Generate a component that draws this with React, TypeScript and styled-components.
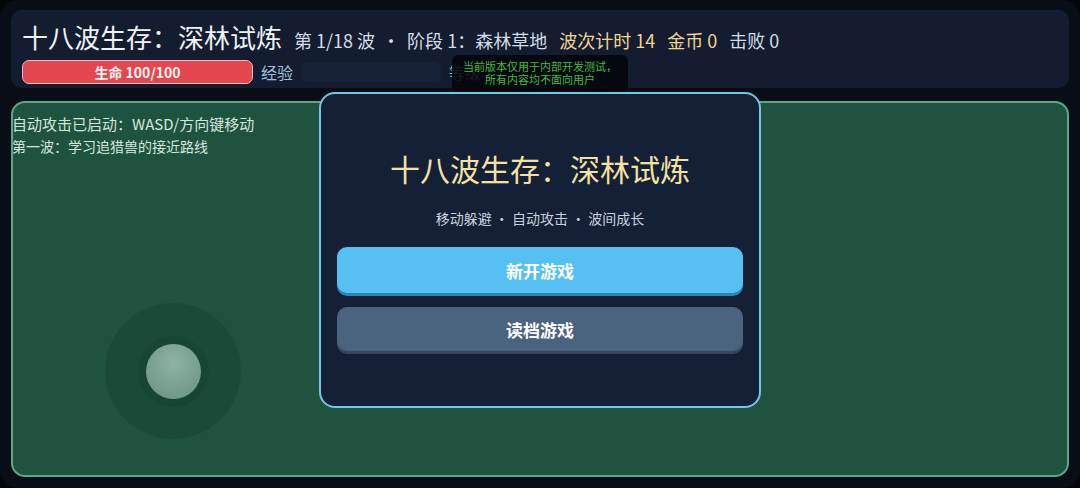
import React from 'react';
import styled, { createGlobalStyle } from 'styled-components';

const GlobalStyle = createGlobalStyle`
  html, body {
    margin: 0;
    padding: 0;
    background: #03060b;
  }
  body {
    font-family: "Noto Sans CJK SC", "Noto Sans", sans-serif;
    color: #dbe4ee;
  }
  * {
    box-sizing: border-box;
  }
`;

const Screen = styled.div`
  position: relative;
  width: 1080px;
  height: 488px;
  padding: 10px 11px 11px 11px;
  display: flex;
  flex-direction: column;
  gap: 13px;
  background: #080d16;
  border-radius: 18px;
  overflow: hidden;
`;

const Header = styled.header`
  background: #131d2f;
  border-radius: 10px;
  padding: 9px 11px 5px 11px;
  display: flex;
  flex-direction: column;
  gap: 5px;
  height: 78px;
`;

const TitleRow = styled.div`
  display: flex;
  align-items: baseline;
  gap: 12px;
  white-space: nowrap;
`;

const GameTitle = styled.h1`
  margin: 0;
  font-size: 26px;
  font-weight: 400;
  line-height: 36px;
  color: #eef2f7;
`;

const Stat = styled.span<{ $tone?: 'gold' }>`
  font-size: 18px;
  color: ${({ $tone }) => ($tone === 'gold' ? '#f1d493' : '#d3dce8')};
`;

const Dot = styled.span`
  font-size: 18px;
  color: #d3dce8;
  margin: 0 7px;
`;

const BarRow = styled.div`
  display: flex;
  align-items: center;
  gap: 8px;
  height: 24px;
`;

const HpBar = styled.div`
  width: 231px;
  height: 24px;
  border-radius: 7px;
  background: #e4474f;
  border: 1.5px solid #f3b9bd;
  display: flex;
  align-items: center;
  justify-content: center;
  font-size: 14px;
  font-weight: 700;
  color: #fff4f4;
`;

const BarLabel = styled.span`
  font-size: 16px;
  color: #9cc0dc;
`;

const ExpBar = styled.div`
  width: 140px;
  height: 20px;
  border-radius: 6px;
  background: #162237;
`;

const Arena = styled.main`
  position: relative;
  flex: 1;
  background: #20533f;
  border: 2px solid #58a98a;
  border-radius: 14px;
`;

const Hud = styled.div`
  position: absolute;
  top: 10px;
  left: -1px;
  display: flex;
  flex-direction: column;
`;

const HudLine = styled.div<{ $size: number }>`
  font-size: ${({ $size }) => $size}px;
  line-height: 22px;
  color: #d3e6dd;
`;

const Joystick = styled.div`
  position: absolute;
  left: 92px;
  top: 200px;
  width: 136px;
  height: 136px;
  border-radius: 50%;
  background: #1c4a39;
  display: flex;
  align-items: center;
  justify-content: center;
`;

const Knob = styled.div`
  width: 55px;
  height: 55px;
  border-radius: 50%;
  background: radial-gradient(circle at 50% 35%, #8eb3a4 0%, #739a8b 70%, #6a9081 100%);
  box-shadow: 0 0 0 8px rgba(20, 60, 45, 0.3);
`;

const Modal = styled.section`
  position: absolute;
  left: 319px;
  top: 92px;
  width: 442px;
  height: 316px;
  background: #142036;
  border: 2px solid #78c4e2;
  border-radius: 16px;
  padding: 52px 16px 0 16px;
  display: flex;
  flex-direction: column;
  align-items: center;
`;

const ModalTitle = styled.h2`
  margin: 0;
  font-size: 30px;
  font-weight: 400;
  line-height: 44px;
  color: #f4e0a3;
`;

const Subtitle = styled.p`
  margin: 18px 0 19px 0;
  font-size: 14px;
  line-height: 20px;
  color: #c8d2de;
`;

const MenuButton = styled.button<{ $variant: 'primary' | 'muted' }>`
  width: 100%;
  height: 46px;
  flex-shrink: 0;
  border: none;
  border-radius: 10px;
  font-family: inherit;
  font-size: 17px;
  font-weight: 700;
  color: #ffffff;
  background: ${({ $variant }) => ($variant === 'primary' ? '#56c0f3' : '#4a6480')};
  box-shadow: 0 3px 0 ${({ $variant }) => ($variant === 'primary' ? '#2f84b4' : '#33475e')};
  & + & {
    margin-top: 14px;
    height: 44px;
  }
`;

const DevBadge = styled.div`
  position: absolute;
  left: 452px;
  top: 55px;
  width: 176px;
  height: 37px;
  border-radius: 6px;
  background: rgba(4, 7, 11, 0.9);
  color: #45b944;
  font-size: 11px;
  line-height: 13px;
  text-align: center;
  padding-top: 5px;
`;

export default function App() {
  return (
    <>
      <GlobalStyle />
      <Screen>
        <Header>
          <TitleRow>
            <GameTitle>十八波生存：深林试炼</GameTitle>
            <Stat>
              第 1/18 波<Dot>·</Dot>阶段 1：森林草地
            </Stat>
            <Stat $tone="gold">波次计时 14</Stat>
            <Stat $tone="gold">金币 0</Stat>
            <Stat>击败 0</Stat>
          </TitleRow>
          <BarRow>
            <HpBar>生命 100/100</HpBar>
            <BarLabel>经验</BarLabel>
            <ExpBar />
            <BarLabel>等级 1</BarLabel>
          </BarRow>
        </Header>
        <Arena>
          <Hud>
            <HudLine $size={15}>自动攻击已启动：WASD/方向键移动</HudLine>
            <HudLine $size={14}>第一波：学习追猎兽的接近路线</HudLine>
          </Hud>
          <Joystick>
            <Knob />
          </Joystick>
        </Arena>
        <Modal>
          <ModalTitle>十八波生存：深林试炼</ModalTitle>
          <Subtitle>移动躲避 · 自动攻击 · 波间成长</Subtitle>
          <MenuButton $variant="primary">新开游戏</MenuButton>
          <MenuButton $variant="muted">读档游戏</MenuButton>
        </Modal>
        <DevBadge>
          当前版本仅用于内部开发测试，
          <br />
          所有内容均不面向用户
        </DevBadge>
      </Screen>
    </>
  );
}
